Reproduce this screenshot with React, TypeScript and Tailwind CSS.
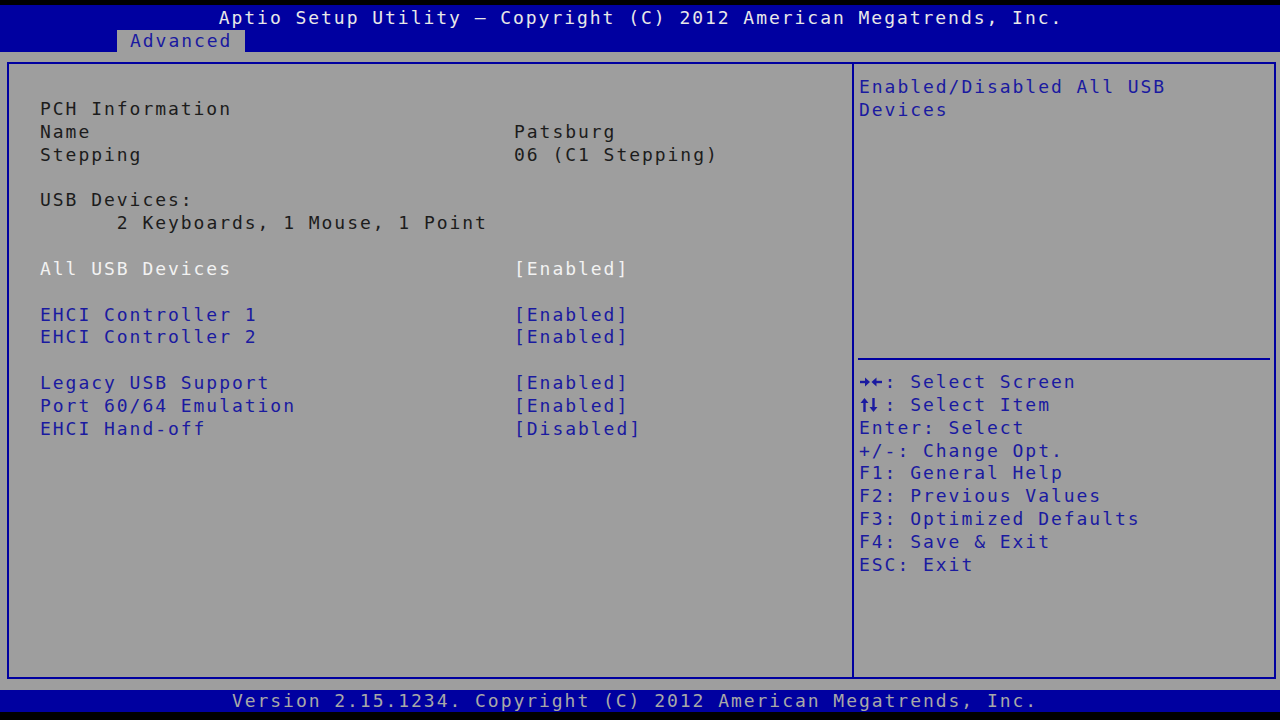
const BLUE = 'text-[#1a1aa0]'

type Row = { label?: string; value?: string; kind?: 'info' | 'sel' | 'opt'; indent?: boolean }

const ROWS: Row[] = [
  { label: 'PCH Information', kind: 'info' },
  { label: 'Name', value: 'Patsburg', kind: 'info' },
  { label: 'Stepping', value: '06 (C1 Stepping)', kind: 'info' },
  {},
  { label: 'USB Devices:', kind: 'info' },
  { label: '2 Keyboards, 1 Mouse, 1 Point', kind: 'info', indent: true },
  {},
  { label: 'All USB Devices', value: '[Enabled]', kind: 'sel' },
  {},
  { label: 'EHCI Controller 1', value: '[Enabled]', kind: 'opt' },
  { label: 'EHCI Controller 2', value: '[Enabled]', kind: 'opt' },
  {},
  { label: 'Legacy USB Support', value: '[Enabled]', kind: 'opt' },
  { label: 'Port 60/64 Emulation', value: '[Enabled]', kind: 'opt' },
  { label: 'EHCI Hand-off', value: '[Disabled]', kind: 'opt' },
]

function LeftRight() {
  return (
    <svg width="25.6" height="16" viewBox="0 0 25.6 16" className="shrink-0" fill="currentColor">
      {/* right arrow */}
      <rect x="1" y="6.8" width="6" height="2.4" />
      <path d="M6 3.5 L11 8 L6 12.5 Z" />
      {/* left arrow */}
      <path d="M12.5 8 L17.5 3.5 L17.5 12.5 Z" />
      <rect x="17" y="6.8" width="6" height="2.4" />
    </svg>
  )
}

function UpDown() {
  return (
    <svg width="25.6" height="16" viewBox="0 0 25.6 16" className="shrink-0" fill="currentColor">
      {/* up arrow */}
      <path d="M1.5 6 L5.5 1 L9.5 6 Z" />
      <rect x="4.3" y="5" width="2.4" height="10" />
      {/* down arrow */}
      <rect x="13.3" y="1" width="2.4" height="10" />
      <path d="M10.5 10 L14.5 15 L18.5 10 Z" />
    </svg>
  )
}

const KEYS: [React.ReactNode, string][] = [
  [<LeftRight />, ': Select Screen'],
  [<UpDown />, ': Select Item'],
  [null, 'Enter: Select'],
  [null, '+/-: Change Opt.'],
  [null, 'F1: General Help'],
  [null, 'F2: Previous Values'],
  [null, 'F3: Optimized Defaults'],
  [null, 'F4: Save & Exit'],
  [null, 'ESC: Exit'],
]

function SetupRow({ row }: { row: Row }) {
  const color =
    row.kind === 'sel' ? 'text-[#f2f2f2]' : row.kind === 'opt' ? BLUE : 'text-[#1c1c1c]'
  return (
    <div className={`flex h-[22.85px] items-center whitespace-pre pt-[2px] ${color}`}>
      <span className={`w-[474px] ${row.indent ? 'pl-[76.8px]' : ''}`}>{row.label ?? ''}</span>
      {row.value && <span>{row.value}</span>}
    </div>
  )
}

export default function App() {
  return (
    <div
      className="flex h-[720px] w-[1280px] flex-col bg-black text-[18px] leading-[22.85px] tracking-[1.96px]"
      style={{ fontFamily: '"DejaVu Sans Mono", "Liberation Mono", monospace' }}
    >
      <div className="h-[5px]" />

      <div className="flex h-[47px] flex-col bg-[#0000a0]">
        <div className="flex h-[25px] items-center justify-center whitespace-pre pl-[2px] pt-[1px] text-[#e8e8e8]">
          Aptio Setup Utility – Copyright (C) 2012 American Megatrends, Inc.
        </div>
        <div className="flex h-[22px] pl-[117px]">
          <div className={`flex items-center bg-[#9e9e9e] px-[13px] ${BLUE}`}>Advanced</div>
        </div>
      </div>

      <div className="h-[638px] bg-[#9e9e9e] pt-[10px] pl-[7px] pr-[4px]">
        <div className="flex h-[617px] border-2 border-[#0000a0]">
          <div className="w-[845px] border-r-2 border-[#0000a0] pl-[31px] pt-[33px]">
            {ROWS.map((r, i) => (
              <SetupRow key={i} row={r} />
            ))}
          </div>

          <div className="flex flex-1 flex-col">
            <div className={`h-[294px] px-[5px] pt-[12px] ${BLUE}`}>
              <div>Enabled/Disabled All USB</div>
              <div>Devices</div>
            </div>
            <div className="mx-[4px] h-[2px] bg-[#0000a0]" />
            <div className={`px-[5px] pt-[11px] ${BLUE}`}>
              {KEYS.map(([icon, text], i) => (
                <div key={i} className="flex h-[22.85px] items-center whitespace-pre">
                  {icon}
                  <span>{text}</span>
                </div>
              ))}
            </div>
          </div>
        </div>
      </div>

      <div className="flex h-[22px] items-center justify-center whitespace-pre bg-[#0000a0] pr-[10px] text-[#a8a8a8]">
        Version 2.15.1234. Copyright (C) 2012 American Megatrends, Inc.
      </div>
      <div className="flex-1" />
    </div>
  )
}
